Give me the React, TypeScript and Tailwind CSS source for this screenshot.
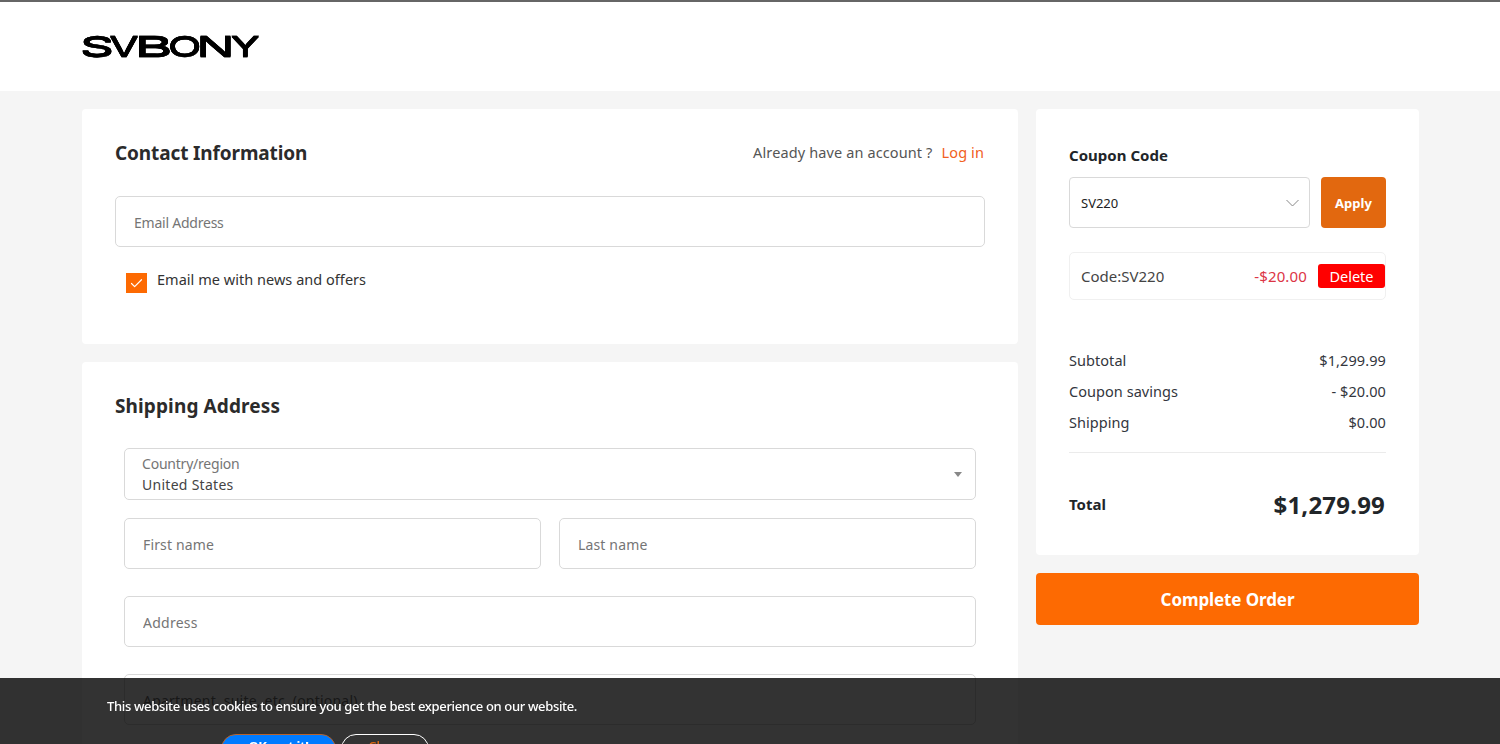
import { useState, FC, ReactNode } from 'react';
import { Check } from 'lucide-react';

interface FieldProps {
  label: string;
  className?: string;
}

const Field: FC<FieldProps> = ({ label, className = '' }) => (
  <input
    type="text"
    aria-label={label}
    placeholder={label}
    className={`block h-[51px] w-full rounded-[5px] border border-[#d9d9d9] bg-white pt-px pl-[18px] text-sm outline-none placeholder:text-[#757575] ${className}`}
  />
);

const Card: FC<{ className: string; children: ReactNode }> = ({ className, children }) => (
  <section className={`rounded bg-white ${className}`}>{children}</section>
);

// Each wordmark letter is stretched to its own width
const letters = [
  { char: 'S', x: -2, width: 34 },
  { char: 'V', x: 27.5, width: 29 },
  { char: 'B', x: 52.5, width: 38 },
  { char: 'O', x: 86, width: 33.5 },
  { char: 'N', x: 114.5, width: 38 },
  { char: 'Y', x: 149, width: 28.5 },
];

// The vertical shadows thicken the horizontal strokes to even out the stretch
const Logo: FC = () => (
  <svg
    width="180"
    height="44"
    viewBox="0 0 180 44"
    role="img"
    aria-label="SVBONY"
    className="overflow-visible fill-black stroke-black stroke-[0.4] font-['Inter',sans-serif] text-[27.5px] font-normal [filter:drop-shadow(0_0.9px_0_#000)_drop-shadow(0_-0.9px_0_#000)]"
  >
    {letters.map(({ char, x, width }) => (
      <text key={char} x={x} y="31.7" textLength={width} lengthAdjust="spacingAndGlyphs">
        {char}
      </text>
    ))}
  </svg>
);

const summary = [
  { label: 'Subtotal', value: '$1,299.99' },
  { label: 'Coupon savings', value: '- $20.00' },
  { label: 'Shipping', value: '$0.00' },
];

const ContactInformation: FC = () => {
  const [subscribed, setSubscribed] = useState(true);

  return (
    <Card className="h-[235px] px-[33px] pt-[30px]">
      <div className="flex h-7 items-center justify-between">
        <h2 className="text-[19px] font-bold tracking-[-0.12px] text-[#2b2b2b]">Contact Information</h2>
        <p className="pr-px pb-px text-[14.5px] tracking-[0.12px] text-[#555]">
          Already have an account ?
          <a href="#" className="ml-[9px] text-[#f16022]">Log in</a>
        </p>
      </div>
      <Field label="Email Address" className="mt-[29px] tracking-[-0.23px]" />
      <button
        type="button"
        role="checkbox"
        aria-checked={subscribed}
        onClick={() => setSubscribed(!subscribed)}
        className="mt-[21px] ml-[11px] flex items-start"
      >
        <span className="mt-[5px] flex h-5 w-[21px] items-center justify-center bg-[#fd6a02]">
          {subscribed && <Check className="size-[15px] text-white" strokeWidth={1.9} />}
        </span>
        <span className="ml-[10px] text-[14.5px] leading-[22px] tracking-[0.03px] text-[#333]">
          Email me with news and offers
        </span>
      </button>
    </Card>
  );
};

const ShippingAddress: FC = () => (
  <Card className="h-[480px] px-[33px] pt-[30px]">
    <h2 className="h-7 text-[19px] leading-7 font-bold tracking-[0.12px] text-[#2b2b2b]">Shipping Address</h2>
    <div className="mt-[28px] px-[9px]">
      <button
        type="button"
        className="flex h-[52px] w-full items-center justify-between rounded-[5px] border border-[#d9d9d9] pr-[13px] pl-[17px] text-left"
      >
        <span className="flex flex-col text-sm leading-[21px]">
          <span className="tracking-[-0.22px] text-[#757575]">Country/region</span>
          <span className="tracking-[0.28px] text-[#444]">United States</span>
        </span>
        <svg width="8" height="5" viewBox="0 0 8 5" className="fill-[#888]">
          <path d="M0 0h8L4 5z" />
        </svg>
      </button>
      <div className="mt-[18px] grid grid-cols-2 gap-[18px]">
        <Field label="First name" className="tracking-[0.15px]" />
        <Field label="Last name" className="tracking-[0.15px]" />
      </div>
      <Field label="Address" className="mt-[27px] tracking-[0.25px]" />
      <Field label="Apartment, suite, etc. (optional)" className="mt-[27px] tracking-[0.22px]" />
    </div>
  </Card>
);

const OrderSummary: FC = () => (
  <Card className="h-[446px] px-[33px] pt-[36px]">
    <h3 className="text-[15px] leading-[21px] font-bold tracking-[0.02px] text-[#212529]">Coupon Code</h3>
    <div className="mt-[11px] flex gap-[11px]">
      <button
        type="button"
        className="flex h-[51px] w-[241px] items-center justify-between rounded border border-[#d9d9d9] pr-[10px] pl-[11px] text-[13px] text-[#222]"
      >
        <span className="pt-0.5">SV220</span>
        <svg width="13" height="8" viewBox="0 0 13 8" fill="none" className="stroke-[#888]">
          <path d="M.5 1l6 6 6-6" />
        </svg>
      </button>
      <button
        type="button"
        className="h-[51px] w-[65px] rounded bg-[#e2680f] pt-0.5 text-[13px] font-bold tracking-[0.1px] text-white"
      >
        Apply
      </button>
    </div>
    <div className="mt-[24px] flex h-[48px] items-center rounded-[5px] border border-[#f0f0f0] pl-[11px] text-[15px]">
      <span className="pt-px text-[#444]">Code:SV220</span>
      <span className="ml-auto pt-px tracking-[0.15px] text-[#dc3545]">-$20.00</span>
      <button type="button" className="ml-[11px] h-6 w-[67px] rounded-[3px] bg-[#ff0000] pb-px text-[14.5px] text-white">
        <span className="block leading-[22px]">Delete</span>
      </button>
    </div>
    <dl className="mt-[45px] border-b border-[#ebebeb] pb-[14px] text-[14.5px] text-[#33363d]">
      {summary.map((row) => (
        <div key={row.label} className="flex h-[31px] items-center justify-between">
          <dt className="tracking-[0.05px]">{row.label}</dt>
          <dd className="tracking-[0.1px]">{row.value}</dd>
        </div>
      ))}
    </dl>
    <div className="mt-[32px] flex h-10 items-center justify-between font-bold text-[#212529]">
      <span className="pb-0.5 text-[15px]">Total</span>
      <span className="pr-px text-2xl tracking-[0.2px]">$1,279.99</span>
    </div>
  </Card>
);

const CookieBanner: FC = () => (
  <div className="fixed inset-x-0 bottom-0 h-[66px] overflow-hidden bg-black/80">
    <p className="mt-[17px] ml-[107px] text-[13px] leading-[22px] font-medium tracking-[-0.34px] text-white">
      This website uses cookies to ensure you get the best experience on our website.
    </p>
    <div className="mt-[17px] ml-[221px] flex gap-[5px] text-[13px] leading-[18px] font-bold">
      <button
        type="button"
        className="h-[30px] w-[115px] rounded-full border border-[#b8632b] bg-[#007bff] pb-[6px] tracking-[-0.4px] text-white"
      >
        OK, got it!
      </button>
      <button
        type="button"
        className="h-[30px] w-[88px] rounded-full border border-white pb-[6px] font-medium text-[#e2680f]"
      >
        Close
      </button>
    </div>
  </div>
);

export default function App() {
  return (
    <div className="h-screen overflow-hidden bg-[#f5f5f5] font-['Noto_Sans',sans-serif]">
      <header className="flex h-[91px] items-center border-t-2 border-[#666] bg-white pl-[82px]">
        <Logo />
      </header>
      <main className="mt-[18px] ml-[82px] flex w-[1337px] items-start gap-[18px]">
        <div className="flex w-[936px] flex-col gap-[18px]">
          <ContactInformation />
          <ShippingAddress />
        </div>
        <aside className="flex-1">
          <OrderSummary />
          <button
            type="button"
            className="mt-[18px] h-[52px] w-full rounded bg-[#fd6a02] pt-0.5 text-[17px] font-bold tracking-[-0.1px] text-white"
          >
            Complete Order
          </button>
        </aside>
      </main>
      <CookieBanner />
    </div>
  );
}
